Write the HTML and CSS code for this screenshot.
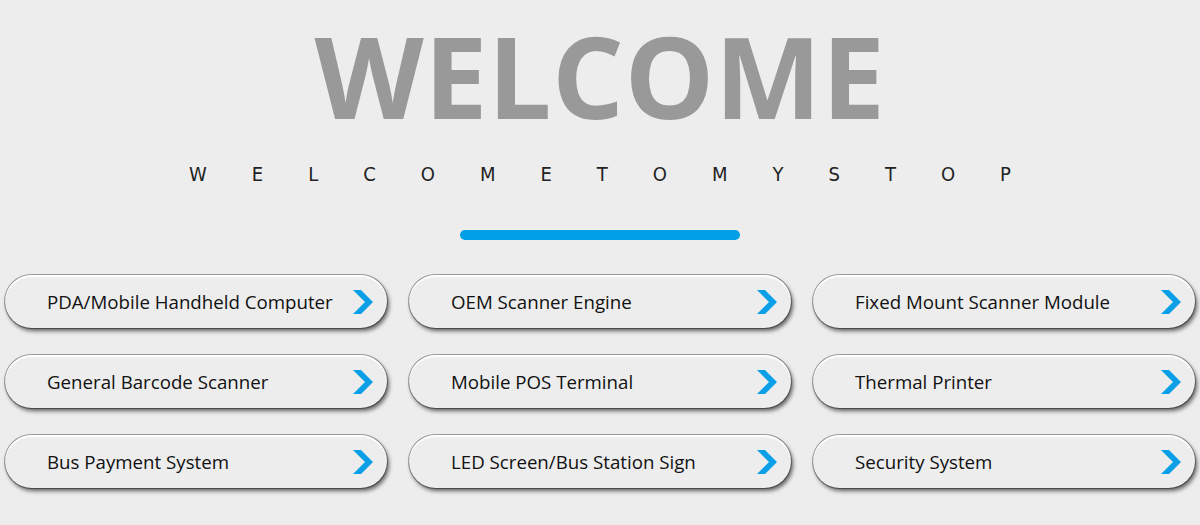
FILE: index.html
```html
<!DOCTYPE html>
<html>
<head>
    <title>Welcome</title>
    <link rel="stylesheet" href="styles.css">
</head>
<body>

<div class="head">
    <h1>WELCOME</h1>
    <p class="sub">WELCOMETOMYSTOP</p>
    <div class="bar"></div>
</div>

<div class="menu">
    <a class="item" href="#">PDA/Mobile Handheld Computer
        <svg class="arrow" viewBox="0 0 20 24"><polygon points="0,0 8,0 20,12 8,24 0,24 12,12"/></svg></a>
    <a class="item" href="#">OEM Scanner Engine
        <svg class="arrow" viewBox="0 0 20 24"><polygon points="0,0 8,0 20,12 8,24 0,24 12,12"/></svg></a>
    <a class="item" href="#">Fixed Mount Scanner Module
        <svg class="arrow" viewBox="0 0 20 24"><polygon points="0,0 8,0 20,12 8,24 0,24 12,12"/></svg></a>
    <a class="item" href="#">General Barcode Scanner
        <svg class="arrow" viewBox="0 0 20 24"><polygon points="0,0 8,0 20,12 8,24 0,24 12,12"/></svg></a>
    <a class="item" href="#">Mobile POS Terminal
        <svg class="arrow" viewBox="0 0 20 24"><polygon points="0,0 8,0 20,12 8,24 0,24 12,12"/></svg></a>
    <a class="item" href="#">Thermal Printer
        <svg class="arrow" viewBox="0 0 20 24"><polygon points="0,0 8,0 20,12 8,24 0,24 12,12"/></svg></a>
    <a class="item" href="#">Bus Payment System
        <svg class="arrow" viewBox="0 0 20 24"><polygon points="0,0 8,0 20,12 8,24 0,24 12,12"/></svg></a>
    <a class="item" href="#">LED Screen/Bus Station Sign
        <svg class="arrow" viewBox="0 0 20 24"><polygon points="0,0 8,0 20,12 8,24 0,24 12,12"/></svg></a>
    <a class="item" href="#">Security System
        <svg class="arrow" viewBox="0 0 20 24"><polygon points="0,0 8,0 20,12 8,24 0,24 12,12"/></svg></a>
</div>

</body>
</html>
```

FILE: styles.css
```css
body {
    margin: 0;
    background-color: #ededed;
    font-family: "Open Sans", "Noto Sans", sans-serif;
}

.head {
    display: flex;
    flex-direction: column;
    align-items: center;
    padding-top: 11px;
}

.head h1 {
    margin: 0;
    font-size: 113px;
    font-weight: 700;
    line-height: 128px;
    color: #999999;
    letter-spacing: 0.4px;
}

.sub {
    margin: 23px 0 0 0;
    font-family: "Liberation Sans Narrow", "DejaVu Sans Condensed", sans-serif;
    font-size: 20px;
    font-weight: 300;
    line-height: 24px;
    color: #222;
    letter-spacing: 45px;
    padding-left: 45px;
}

.bar {
    width: 280px;
    height: 10px;
    border-radius: 5px;
    background-color: #009fe8;
    margin-top: 44px;
}

.menu {
    display: grid;
    grid-template-columns: repeat(3, 382px);
    column-gap: 22px;
    row-gap: 27px;
    padding: 35px 0 20px 5px;
}

.item {
    display: flex;
    align-items: center;
    justify-content: space-between;
    height: 53px;
    box-sizing: border-box;
    padding: 0 14px 0 42px;
    border-radius: 27px;
    background-color: #ededed;
    color: #111;
    text-decoration: none;
    font-size: 18.7px;
    box-shadow: 0 0 1px 0 #000, 0 0 0 1px rgba(0, 0, 0, 0.25), 2px 3px 4px rgba(0, 0, 0, 0.6), inset 0 2px 1px #fff;
}

.arrow {
    width: 20px;
    height: 24px;
    fill: #0a9fe6;
}
```
